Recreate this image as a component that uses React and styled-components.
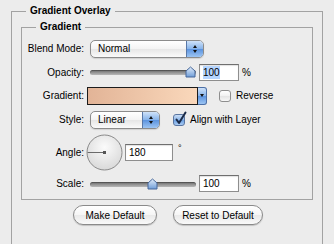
import styled, { createGlobalStyle } from "styled-components";

const Global = createGlobalStyle`
body {
  margin: 0;
  background: #ececec;
  font-family: "Liberation Sans", Arial, sans-serif;
  font-size: 10px;
  color: #000;
  overflow: hidden;
}
`

const Page = styled.div`
padding: 4px 0 0 11px;
`
const Outer = styled.fieldset`
margin: 0;
width: 312px;
height: 241px;
box-sizing: border-box;
border: 1px solid #a2a2a2;
padding: 2px 9px 0;
min-inline-size: 0;
`
const Legend = styled.legend`
font-weight: bold;
font-size: 10px;
line-height: 14px;
padding: 0 4px;
margin-left: ${p => p.$offset}px;
`
const Inner = styled.fieldset`
margin: 0;
border: 1px solid #a2a2a2;
padding: 5px 0 7px;
min-inline-size: 0;
`
const Rows = styled.div`
display: flex;
flex-direction: column;
gap: 5px;
`
const Row = styled.div`
display: flex;
align-items: center;
height: ${p => p.$h}px;
`
const Label = styled.span`
width: 62px;
flex: none;
text-align: right;
margin-right: 6px;
`
const Popup = styled.div`
width: ${p => p.$w}px;
height: 18px;
box-sizing: border-box;
display: flex;
align-items: center;
padding-left: 7px;
border: 1px solid #8b8b8b;
border-radius: 5px;
overflow: hidden;
background: linear-gradient(#ffffff, #f3f3f3 50%, #e6e6e6 51%, #fafafa);
box-shadow: 0 1px 1px rgba(0, 0, 0, 0.12);
`
const Stepper = styled.div`
margin-left: auto;
width: 16px;
height: 100%;
display: flex;
flex-direction: column;
align-items: center;
justify-content: center;
gap: 2px;
border-left: 1px solid #5878a8;
background: linear-gradient(#cfe2f9, #86b3ea 50%, #5b93df 51%, #9cc4f2);
`
const Arrow = styled.span`
width: 0;
height: 0;
border-left: 2.5px solid transparent;
border-right: 2.5px solid transparent;
${p => p.$down ? "border-top: 3px solid #111;" : "border-bottom: 3px solid #111;"}
`
const Slider = styled.div`
position: relative;
width: 106px;
height: 12px;
flex: none;
`
const Track = styled.div`
position: absolute;
left: 0;
right: 0;
top: 4px;
height: 5px;
border-radius: 3px;
background: linear-gradient(#6e6e6e, #9a9a9a 60%, #b8b8b8);
box-shadow: inset 0 1px 1px rgba(0, 0, 0, 0.3);
`
const Thumb = styled.svg`
position: absolute;
top: 0;
`
const Field = styled.div`
margin-left: ${p => p.$ml}px;
width: ${p => p.$w}px;
height: 17px;
box-sizing: border-box;
border: 1px solid #8e8e8e;
border-top-color: #6f6f6f;
background: #fff;
box-shadow: inset 0 1px 1px rgba(0, 0, 0, 0.12);
display: flex;
align-items: center;
padding-left: 3px;
`
const Selected = styled.span`
background: #b5d5ff;
padding: 1px 0;
`
const Unit = styled.span`
margin-left: 3px;
`
const GradientBox = styled.div`
margin-left: -3px;
width: 120px;
height: 18px;
display: flex;
`
const Swatch = styled.div`
flex: 1;
border: 1px solid #1c1c1c;
background: linear-gradient(to right, #e2b497, #fad8bb);
`
const DropButton = styled.div`
width: 9px;
box-sizing: border-box;
border: 1px solid #4c6fa6;
border-left: none;
border-radius: 0 3px 3px 0;
background: linear-gradient(#cfe2f9, #86b3ea 50%, #5b93df 51%, #9cc4f2);
display: flex;
align-items: center;
justify-content: center;
`
const Box = styled.span`
position: relative;
margin-left: ${p => p.$ml}px;
width: 12px;
height: 12px;
box-sizing: border-box;
flex: none;
border: 1px solid ${p => p.$checked ? "#5a75a0" : "#8e8e8e"};
border-radius: 3px;
background: ${p => p.$checked
  ? "linear-gradient(#c9ddf6, #8db6e8 50%, #6a9fe2 51%, #a9cbf3)"
  : "linear-gradient(#ffffff, #f1f1f1 50%, #e4e4e4 51%, #f7f7f7)"};
`
const Check = styled.svg`
position: absolute;
left: 0;
top: -4px;
`
const BoxLabel = styled.span`
margin-left: 5px;
`
const Dial = styled.svg`
margin-left: -4px;
flex: none;
`
const Degree = styled.span`
align-self: flex-start;
margin: 9px 0 0 5px;
font-size: 9px;
`
const Buttons = styled.div`
display: flex;
gap: 16px;
margin-top: 5px;
padding-left: 52px;
`
const Button = styled.button`
width: ${p => p.$w}px;
height: 20px;
padding: 0;
font-family: inherit;
font-size: 10px;
color: #000;
border: 1px solid #8a8a8a;
border-radius: 10px;
background: linear-gradient(#ffffff, #f5f5f5 50%, #e9e9e9 51%, #f9f9f9);
box-shadow: 0 1px 1px rgba(0, 0, 0, 0.18);
`

const SliderControl = ({ value }) => (
  <Slider>
    <Track />
    <Thumb width="11" height="12" viewBox="0 0 11 12" style={{ left: `${value * 0.95}px` }}>
      <defs>
        <linearGradient id="tg" x1="0" y1="0" x2="0" y2="1">
          <stop offset="0" stopColor="#e2edfb" />
          <stop offset="1" stopColor="#6f9dd8" />
        </linearGradient>
      </defs>
      <path d="M1 5 L5.5 1 L10 5 V11 H1 Z" fill="url(#tg)" stroke="#46679a" strokeWidth="1" strokeLinejoin="round" />
    </Thumb>
  </Slider>
)

const Stepped = () => (
  <Stepper>
    <Arrow />
    <Arrow $down />
  </Stepper>
)

const App = () => {
  return (
    <Page>
      <Global />
      <Outer>
        <Legend $offset={5}>Gradient Overlay</Legend>
        <Inner>
          <Legend $offset={14}>Gradient</Legend>
          <Rows>
            <Row $h={19}>
              <Label>Blend Mode:</Label>
              <Popup $w={114}>Normal<Stepped /></Popup>
            </Row>
            <Row $h={18}>
              <Label>Opacity:</Label>
              <SliderControl value={100} />
              <Field $ml={3} $w={40}><Selected>100</Selected></Field>
              <Unit>%</Unit>
            </Row>
            <Row $h={19}>
              <Label>Gradient:</Label>
              <GradientBox>
                <Swatch />
                <DropButton><Arrow $down /></DropButton>
              </GradientBox>
              <Box $ml={12} />
              <BoxLabel>Reverse</BoxLabel>
            </Row>
            <Row $h={19}>
              <Label>Style:</Label>
              <Popup $w={70}>Linear<Stepped /></Popup>
              <Box $ml={13} $checked>
                <Check width="14" height="14" viewBox="0 0 14 14">
                  <path d="M2.5 8.5 L5 12 L11.5 1.5" fill="none" stroke="#1b2b48" strokeWidth="2" strokeLinecap="round" strokeLinejoin="round" />
                </Check>
              </Box>
              <BoxLabel>Align with Layer</BoxLabel>
            </Row>
            <Row $h={36}>
              <Label>Angle:</Label>
              <Dial width="37" height="37" viewBox="0 0 37 37">
                <defs>
                  <radialGradient id="dg" cx="0.5" cy="0.35" r="0.65">
                    <stop offset="0" stopColor="#fbfbfb" />
                    <stop offset="1" stopColor="#d9d9d9" />
                  </radialGradient>
                </defs>
                <circle cx="18.5" cy="18.5" r="17.5" fill="url(#dg)" stroke="#8a8a8a" />
                <line x1="1.5" y1="18.5" x2="18.5" y2="18.5" stroke="#6a6a6a" />
                <rect x="17" y="17" width="3" height="3" fill="#555" />
              </Dial>
              <Field $ml={2} $w={48}>180</Field>
              <Degree>°</Degree>
            </Row>
            <Row $h={17}>
              <Label>Scale:</Label>
              <SliderControl value={60} />
              <Field $ml={3} $w={40}>100</Field>
              <Unit>%</Unit>
            </Row>
          </Rows>
        </Inner>
        <Buttons>
          <Button $w={84}>Make Default</Button>
          <Button $w={90}>Reset to Default</Button>
        </Buttons>
      </Outer>
    </Page>
  )
}

export default App;
